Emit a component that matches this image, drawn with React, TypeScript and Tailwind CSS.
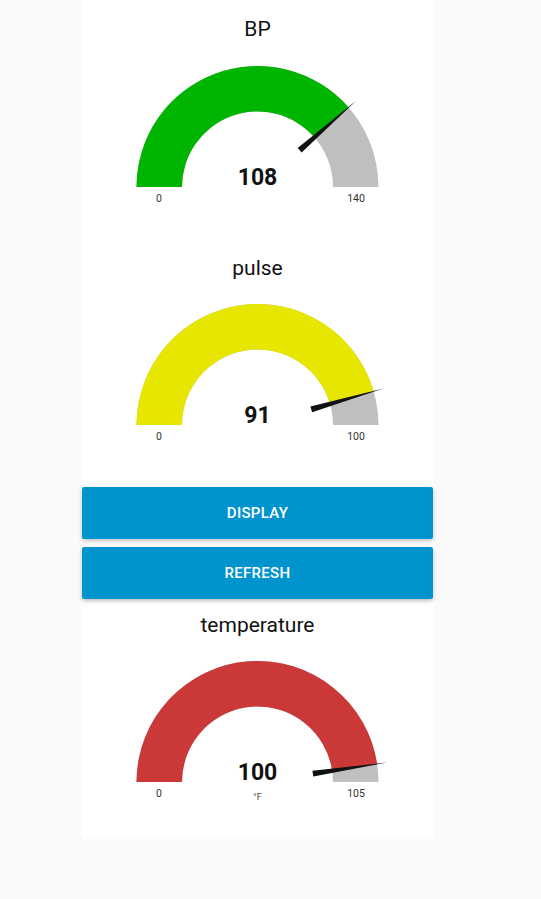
import React from "react";

const CX = 176.5;
const R_OUT = 121;
const R_IN = 75.5;

interface GaugeProps {
  title: string;
  value: number;
  max: number;
  color: string;
  cy: number;
  height: number;
  titleClass: string;
  units?: string;
}

/* 반원 링 조각: 각도는 라디안, 0 = 오른쪽 */
function ringPath(cy: number, a1: number, a2: number) {
  const p = (r: number, a: number) =>
    `${(CX + r * Math.cos(a)).toFixed(2)} ${(cy - r * Math.sin(a)).toFixed(2)}`;
  return [
    `M ${p(R_OUT, a1)}`,
    `A ${R_OUT} ${R_OUT} 0 0 1 ${p(R_OUT, a2)}`,
    `L ${p(R_IN, a2)}`,
    `A ${R_IN} ${R_IN} 0 0 0 ${p(R_IN, a1)}`,
    "Z",
  ].join(" ");
}

function Gauge({ title, value, max, color, cy, height, titleClass, units }: GaugeProps) {
  const theta = Math.PI * (1 - value / max);
  const cos = Math.cos(theta);
  const sin = Math.sin(theta);
  const baseR = 56;
  const tipR = 131;
  const half = 3;
  const bx = CX + baseR * cos;
  const by = cy - baseR * sin;
  const needle = [
    `${bx - half * sin},${by - half * cos}`,
    `${bx + half * sin},${by + half * cos}`,
    `${CX + tipR * cos},${cy - tipR * sin}`,
  ].join(" ");

  return (
    <div>
      <div
        className={`flex items-center justify-center pt-[2px] text-[21px] text-[#111] ${titleClass}`}
      >
        {title}
      </div>
      <svg width={353} height={height} className="block" fontFamily="Roboto, sans-serif">
        <path d={ringPath(cy, Math.PI, 0)} fill="#bfbfbf" />
        <path d={ringPath(cy, Math.PI, theta)} fill={color} />
        <polygon points={needle} fill="#111" />
        <text x={CX} y={cy - 2} textAnchor="middle" fontSize={23} fontWeight={700} fill="#111">
          {value}
        </text>
        <text x={CX - 98.5} y={cy + 15} textAnchor="middle" fontSize={10.5} fill="#333">
          0
        </text>
        <text x={CX + 98.5} y={cy + 15} textAnchor="middle" fontSize={10.5} fill="#333">
          {max}
        </text>
        {units && (
          <text x={CX} y={cy + 18} textAnchor="middle" fontSize={9} fill="#444">
            {units}
          </text>
        )}
      </svg>
    </div>
  );
}

function DashButton({ label }: { label: string }) {
  return (
    <button className="mx-[1px] flex h-[52px] items-center justify-center rounded-[2px] bg-[#0094ce] text-[15px] font-medium tracking-[0.3px] text-white uppercase shadow-[0_2px_4px_rgba(0,0,0,0.25)]">
      {label}
    </button>
  );
}

export default function App() {
  return (
    <div className="min-h-[899px] bg-[#fafafa] font-['Roboto',sans-serif]">
      <div className="ml-[81px] flex w-[353px] flex-col bg-white pb-[1px]">
        <Gauge
          title="BP"
          value={108}
          max={140}
          color="#00b500"
          cy={129}
          height={181}
          titleClass="h-[58px]"
        />
        <Gauge
          title="pulse"
          value={91}
          max={100}
          color="#e6e600"
          cy={128}
          height={181}
          titleClass="h-[58px]"
        />
        <div className="mt-[9px] flex flex-col gap-[8px]">
          <DashButton label="Display" />
          <DashButton label="Refresh" />
        </div>
        <Gauge
          title="temperature"
          value={100}
          max={105}
          color="#ca3838"
          cy={131}
          height={187}
          titleClass="h-[52px]"
          units="°F"
        />
      </div>
    </div>
  );
}
